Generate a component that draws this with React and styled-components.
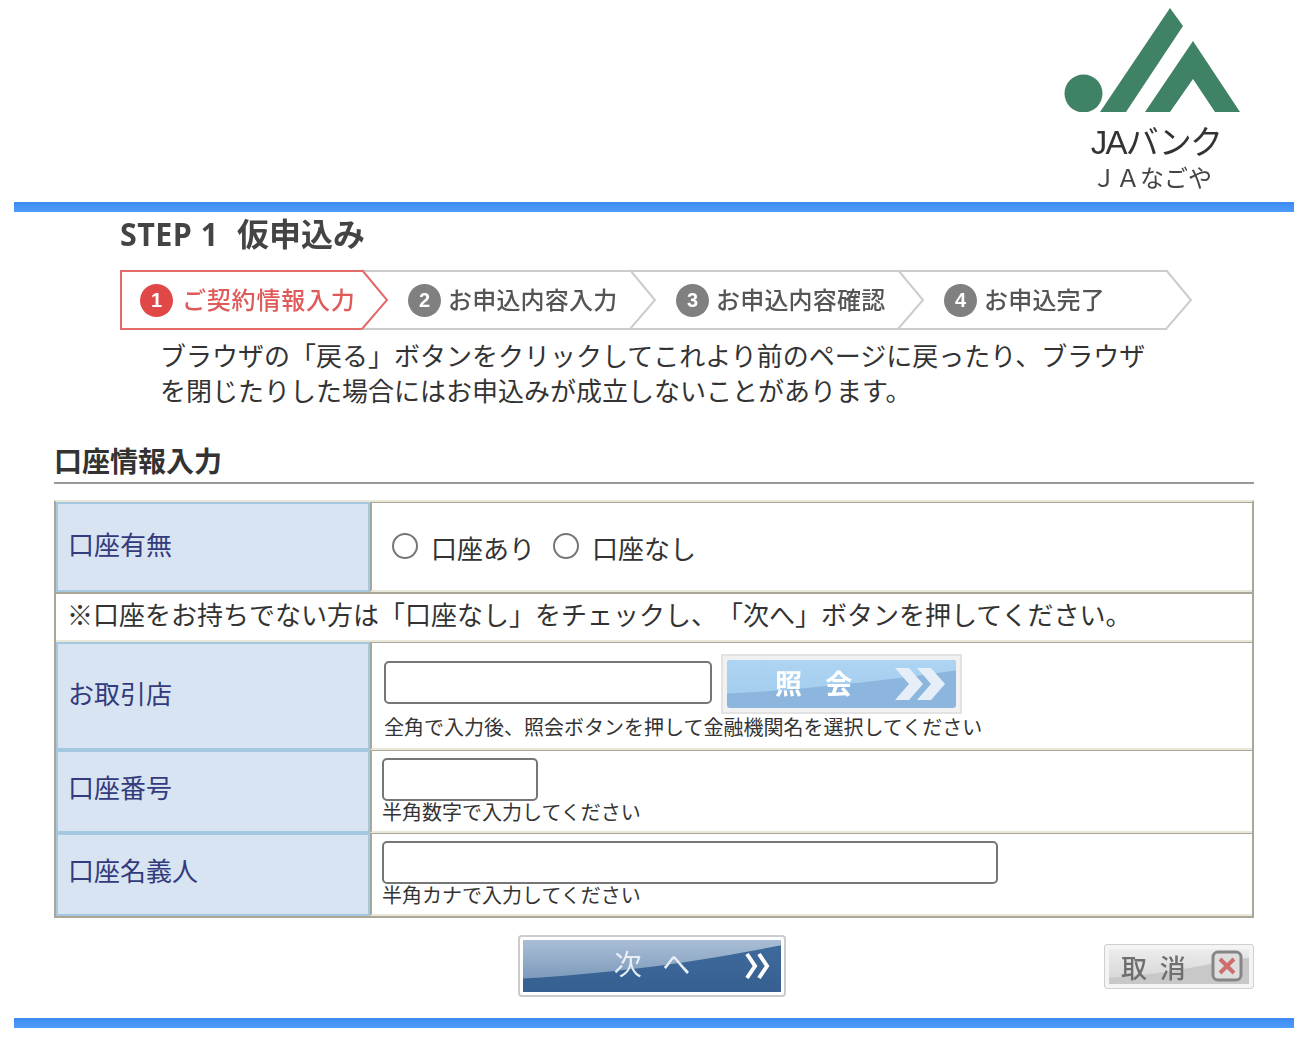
import React from 'react'
import styled, { createGlobalStyle } from 'styled-components'

const GlobalStyle = createGlobalStyle`
  html, body { margin: 0; padding: 0; background: #fff; }
  body {
    font-family: "Noto Sans CJK JP", "Noto Sans", sans-serif;
    color: #333;
    text-spacing-trim: space-all;
  }
`

const Page = styled.div`
  width: 1280px;
  height: 1050px;
  margin-left: 14px;
`
const Header = styled.header`
  height: 202px;
  display: flex;
  justify-content: flex-end;
  padding-right: 54px;
  box-sizing: border-box;
`
const Logo = styled.div`
  width: 176px;
  padding-top: 8px;
  display: flex;
  flex-direction: column;
  align-items: center;
  filter: blur(0.4px);
`
const LogoMark = styled.svg`
  display: block;
  width: 176px;
  height: 104px;
`
const BankName = styled.div`
  font-family: "Liberation Sans", "Noto Sans CJK JP", sans-serif;
  font-size: 33px;
  line-height: 36px;
  margin: 13px 0 0 8px;
  letter-spacing: -1.7px;
  color: #333;
`
const BranchName = styled.div`
  font-size: 24px;
  line-height: 32px;
  color: #444;
`
const BlueBar = styled.div`
  height: 10px;
  background: linear-gradient(#3d8bf0, #4f9cfc);
`
const Content = styled.main`
  padding: 0 40px;
`
const StepSection = styled.section`
  padding-left: 66px;
`
const Title = styled.h1`
  margin: 0;
  height: 55px;
  box-sizing: border-box;
  font-size: 32px;
  line-height: 40px;
  font-weight: 700;
  color: #444;
  filter: blur(0.5px);
  span {
    font-family: "Open Sans", sans-serif;
    display: inline-block;
    transform: scaleX(0.95);
    transform-origin: left center;
    width: 117px;
    letter-spacing: 0.5px;
  }
`
const StepBar = styled.ol`
  list-style: none;
  margin: 3px 0 0;
  padding: 0;
  width: 1047px;
  height: 60px;
  box-sizing: border-box;
  display: flex;
  border-top: 2px solid #ccc;
  border-bottom: 2px solid #ccc;
  filter: blur(0.4px);
`
const Step = styled.li`
  position: relative;
  flex: 0 0 268px;
  display: flex;
  align-items: center;
  gap: ${p => (p.$active ? '9px' : '7px')};
  padding-left: 20px;
  box-sizing: border-box;
  font-size: 24px;
  font-weight: 500;
  letter-spacing: ${p => (p.$active ? '0.8px' : '0.2px')};
  color: ${p => (p.$active ? '#e05a5a' : '#555')};
  ${p => p.$active && `
    &::before {
      content: '';
      position: absolute;
      left: 0;
      top: -2px;
      bottom: -2px;
      width: 242px;
      border: 2px solid #e46a6a;
      border-right: 0;
      box-sizing: border-box;
    }
  `}
`
const StepLabel = styled.span`
  padding-bottom: 4px;
`
const StepNumber = styled.span`
  width: 33px;
  height: 33px;
  flex: none;
  border-radius: 50%;
  background: ${p => (p.$active ? '#e04848' : '#808080')};
  color: #fff;
  font-size: 20px;
  font-weight: 700;
  line-height: 33px;
  text-align: center;
  letter-spacing: 0;
  font-family: "Liberation Sans", sans-serif;
`
const Chevron = styled.svg`
  position: absolute;
  left: 241px;
  top: -2px;
  width: 28px;
  height: 60px;
  overflow: visible;
`
const Notice = styled.p`
  margin: 7px 0 0 106px;
  width: 1000px;
  font-size: 26px;
  line-height: 35px;
  font-weight: 400;
  color: #333;
`
const SectionHead = styled.h2`
  margin: 23px 0 16px;
  height: 54px;
  box-sizing: border-box;
  border-bottom: 2px solid #999;
  font-size: 28px;
  line-height: 38px;
  padding-top: 11px;
  font-weight: 700;
  color: #333;
`
const FormTable = styled.table`
  width: 1200px;
  table-layout: fixed;
  border-collapse: separate;
  border-spacing: 0;
  border-top: 2px solid #e9e7d9;
  border-left: 2px solid #aaa798;
  border-right: 2px solid #aaa798;
  border-bottom: 2px solid #aaa798;
  box-sizing: border-box;
  font-size: 26px;
`
const HeadCell = styled.th`
  width: 314px;
  height: ${p => p.$h}px;
  box-sizing: border-box;
  padding: 0 0 ${p => p.$pb || 0}px 10px;
  background: #d8e4f2;
  border: 2px solid #a3c8df;
  color: #333b7c;
  font-size: 26px;
  font-weight: 400;
  text-align: left;
`
const ValueCell = styled.td`
  box-sizing: border-box;
  height: ${p => p.$h}px;
  padding: ${p => p.$pad || '0'};
  border-top: 1px solid #aaa798;
  border-left: 2px solid #aaa798;
  border-bottom: 2px solid #e9e7d9;
  vertical-align: top;
`
const NoteCell = styled.td`
  height: 50px;
  box-sizing: border-box;
  padding: 0 0 8px 11px;
  border-top: 2px solid #aaa798;
  border-bottom: 2px solid #e9e7d9;
  font-weight: 400;
  color: #333;
`
const RadioRow = styled.div`
  display: flex;
  align-items: center;
  height: 86px;
  padding-left: 20px;
  font-weight: 400;
  color: #333;
`
const Radio = styled.input.attrs({ type: 'radio', name: 'account' })`
  appearance: none;
  width: 26px;
  height: 26px;
  margin: 0 13px 0 0;
  border: 2px solid #767676;
  border-radius: 50%;
  background: #fff;
  box-sizing: border-box;
`
const RadioLabel = styled.label`
  margin-right: 18px;
  padding-top: 2px;
`
const TextBox = styled.input.attrs({ type: 'text' })`
  display: block;
  flex: none;
  width: ${p => p.$w}px;
  height: 43px;
  box-sizing: border-box;
  border: 2px solid #767676;
  border-radius: 5px;
  background: #fff;
  padding: 0;
  margin: ${p => p.$top || 0}px 0 0;
`
const LookupRow = styled.div`
  display: flex;
  align-items: flex-start;
  gap: 9px;
  margin-bottom: 1px;
`
const Hint = styled.div`
  font-size: 20px;
  line-height: 24px;
  font-weight: 400;
  color: #333;
`
const InputHint = styled(Hint)`
  margin-top: -1px;
`
const FaceLabel = styled.span`
  position: relative;
`
const Gloss = styled.svg`
  position: absolute;
  inset: 0;
  width: 100%;
  height: 100%;
`
const LookupButton = styled.button`
  width: 241px;
  height: 60px;
  padding: 4px;
  box-sizing: border-box;
  background: #f1f1f1;
  border: 2px solid #e2e2e2;
  display: block;
  font-family: inherit;
  filter: blur(0.4px);
`
const LookupFace = styled.span`
  position: relative;
  overflow: hidden;
  height: 100%;
  display: flex;
  align-items: center;
  padding: 0 11px 4px 48px;
  box-sizing: border-box;
  border-radius: 3px;
  background: #8cb6de;
  color: #fff;
  font-size: 27px;
  font-weight: 700;
  word-spacing: 17px;
  svg:last-child { position: relative; margin-left: auto; top: 2px; }
`
const Actions = styled.div`
  display: grid;
  grid-template-columns: 464px 268px 1fr;
  align-items: center;
  margin-top: 17px;
  height: 62px;
`
const NextButton = styled.button`
  grid-column: 2;
  width: 268px;
  height: 62px;
  padding: 3px;
  box-sizing: border-box;
  background: #fff;
  border: 2px solid #ccc;
  border-radius: 4px;
  font-family: inherit;
  filter: blur(0.4px);
`
const NextFace = styled.span`
  position: relative;
  overflow: hidden;
  height: 100%;
  display: flex;
  align-items: center;
  justify-content: center;
  padding-bottom: 6px;
  box-sizing: border-box;
  background: linear-gradient(#3f6c9d, #365f90);
  color: #e8eef5;
  font-size: 28px;
  word-spacing: 14px;
  svg:last-child {
    position: absolute;
    right: 9px;
    top: 12px;
  }
`
const CancelButton = styled.button`
  grid-column: 3;
  justify-self: end;
  width: 150px;
  height: 45px;
  padding: 4px;
  box-sizing: border-box;
  background: #f4f4f4;
  border: 1px solid #d0d0d0;
  border-radius: 3px;
  font-family: inherit;
  filter: blur(0.4px);
`
const CancelFace = styled.span`
  position: relative;
  overflow: hidden;
  height: 100%;
  display: flex;
  align-items: center;
  padding: 0 6px 0 12px;
  box-sizing: border-box;
  background: #c8c8c8;
  color: #6e6e6e;
  font-size: 26px;
  font-weight: 500;
  word-spacing: 7px;
  svg:last-child { position: relative; margin-left: auto; }
`
const BottomBar = styled(BlueBar)`
  margin-top: 21px;
`

const steps = ['ご契約情報入力', 'お申込内容入力', 'お申込内容確認', 'お申込完了']

const ChevronMark = ({ active }) => (
  <Chevron viewBox="0 0 28 60">
    <path d="M1 0 L26 30 L1 59" fill={active ? 'none' : '#fff'} stroke={active ? '#e46a6a' : '#ccc'} strokeWidth="2" />
  </Chevron>
)

const Sheen = ({ d, from, to }) => {
  const id = `sheen-${from.slice(1)}`
  return (
    <Gloss viewBox="0 0 100 100" preserveAspectRatio="none">
      <defs>
        <linearGradient id={id} x1="0" y1="0" x2="0" y2="1">
          <stop offset="0" stopColor={from} />
          <stop offset="1" stopColor={to} />
        </linearGradient>
      </defs>
      <path d={d} fill={`url(#${id})`} />
    </Gloss>
  )
}

export default function App() {
  return (
    <Page>
      <GlobalStyle />
      <Header>
        <Logo>
          <LogoMark viewBox="0 0 176 104">
            <g fill="#3f8266">
              <circle cx="19.5" cy="85.5" r="19" />
              <polygon points="106,0 119,18 62,104 36,104" />
              <polygon points="129,33 176,104 151,104 129,71 106,104 81,104" />
            </g>
          </LogoMark>
          <BankName>JAバンク</BankName>
          <BranchName>ＪＡなごや</BranchName>
        </Logo>
      </Header>
      <BlueBar />
      <Content>
        <StepSection>
          <Title><span>STEP 1</span>仮申込み</Title>
          <StepBar>
            {steps.map((label, i) => (
              <Step key={label} $active={i === 0}>
                <StepNumber $active={i === 0}>{i + 1}</StepNumber>
                <StepLabel>{label}</StepLabel>
                <ChevronMark active={i === 0} />
              </Step>
            ))}
          </StepBar>
        </StepSection>
        <Notice>ブラウザの「戻る」ボタンをクリックしてこれより前のページに戻ったり、ブラウザを閉じたりした場合にはお申込みが成立しないことがあります。</Notice>
        <SectionHead>口座情報入力</SectionHead>
        <FormTable>
          <tbody>
            <tr>
              <HeadCell $h={90} $pb={8}>口座有無</HeadCell>
              <ValueCell $h={90}>
                <RadioRow>
                  <Radio id="yes" />
                  <RadioLabel htmlFor="yes">口座あり</RadioLabel>
                  <Radio id="no" />
                  <RadioLabel htmlFor="no">口座なし</RadioLabel>
                </RadioRow>
              </ValueCell>
            </tr>
            <tr>
              <NoteCell colSpan={2}>※口座をお持ちでない方は「口座なし」をチェックし、「次へ」ボタンを押してください。</NoteCell>
            </tr>
            <tr>
              <HeadCell $h={108} $pb={8}>お取引店</HeadCell>
              <ValueCell $h={108} $pad="11px 0 0 12px">
                <LookupRow>
                  <TextBox $w={328} $top={7} />
                  <LookupButton type="button">
                    <LookupFace>
                      <Sheen d="M0 0 H100 V22 C70 42 35 62 0 70 Z" from="#aed4f2" to="#a4cdee" />
                      <FaceLabel>照 会</FaceLabel>
                      <svg width="50" height="32" viewBox="0 0 50 32">
                        <path d="M0 0 H14 L28 16 L14 32 H0 L14 16 Z" fill="#e6eff8" />
                        <path d="M22 0 H36 L50 16 L36 32 H22 L36 16 Z" fill="#e6eff8" />
                      </svg>
                    </LookupFace>
                  </LookupButton>
                </LookupRow>
                <Hint>全角で入力後、照会ボタンを押して金融機関名を選択してください</Hint>
              </ValueCell>
            </tr>
            <tr>
              <HeadCell $h={83} $pb={10}>口座番号</HeadCell>
              <ValueCell $h={83} $pad="7px 0 0 10px">
                <TextBox $w={156} />
                <InputHint>半角数字で入力してください</InputHint>
              </ValueCell>
            </tr>
            <tr>
              <HeadCell $h={83} $pb={10}>口座名義人</HeadCell>
              <ValueCell $h={83} $pad="7px 0 0 10px">
                <TextBox $w={616} />
                <InputHint>半角カナで入力してください</InputHint>
              </ValueCell>
            </tr>
          </tbody>
        </FormTable>
        <Actions>
          <NextButton type="button">
            <NextFace>
              <Sheen d="M0 0 H100 V10 C70 40 40 62 0 74 Z" from="#aabed5" to="#7d9bbc" />
              <FaceLabel>次 へ</FaceLabel>
              <svg width="28" height="28" viewBox="0 0 28 28">
                <path d="M3 2 L11 14 L3 26 M15 2 L23 14 L15 26" fill="none" stroke="#fff" strokeWidth="4" />
              </svg>
            </NextFace>
          </NextButton>
          <CancelButton type="button">
            <CancelFace>
              <Sheen d="M0 0 H100 V25 C75 35 50 70 0 82 Z" from="#ececec" to="#d8d8d8" />
              <FaceLabel>取 消</FaceLabel>
              <svg width="32" height="32" viewBox="0 0 32 32">
                <rect x="2" y="2" width="28" height="28" rx="5" fill="#dedede" stroke="#858585" strokeWidth="3" />
                <path d="M9 9 L23 23 M23 9 L9 23" stroke="#cf6e6e" strokeWidth="4" />
              </svg>
            </CancelFace>
          </CancelButton>
        </Actions>
      </Content>
      <BottomBar />
    </Page>
  )
}
